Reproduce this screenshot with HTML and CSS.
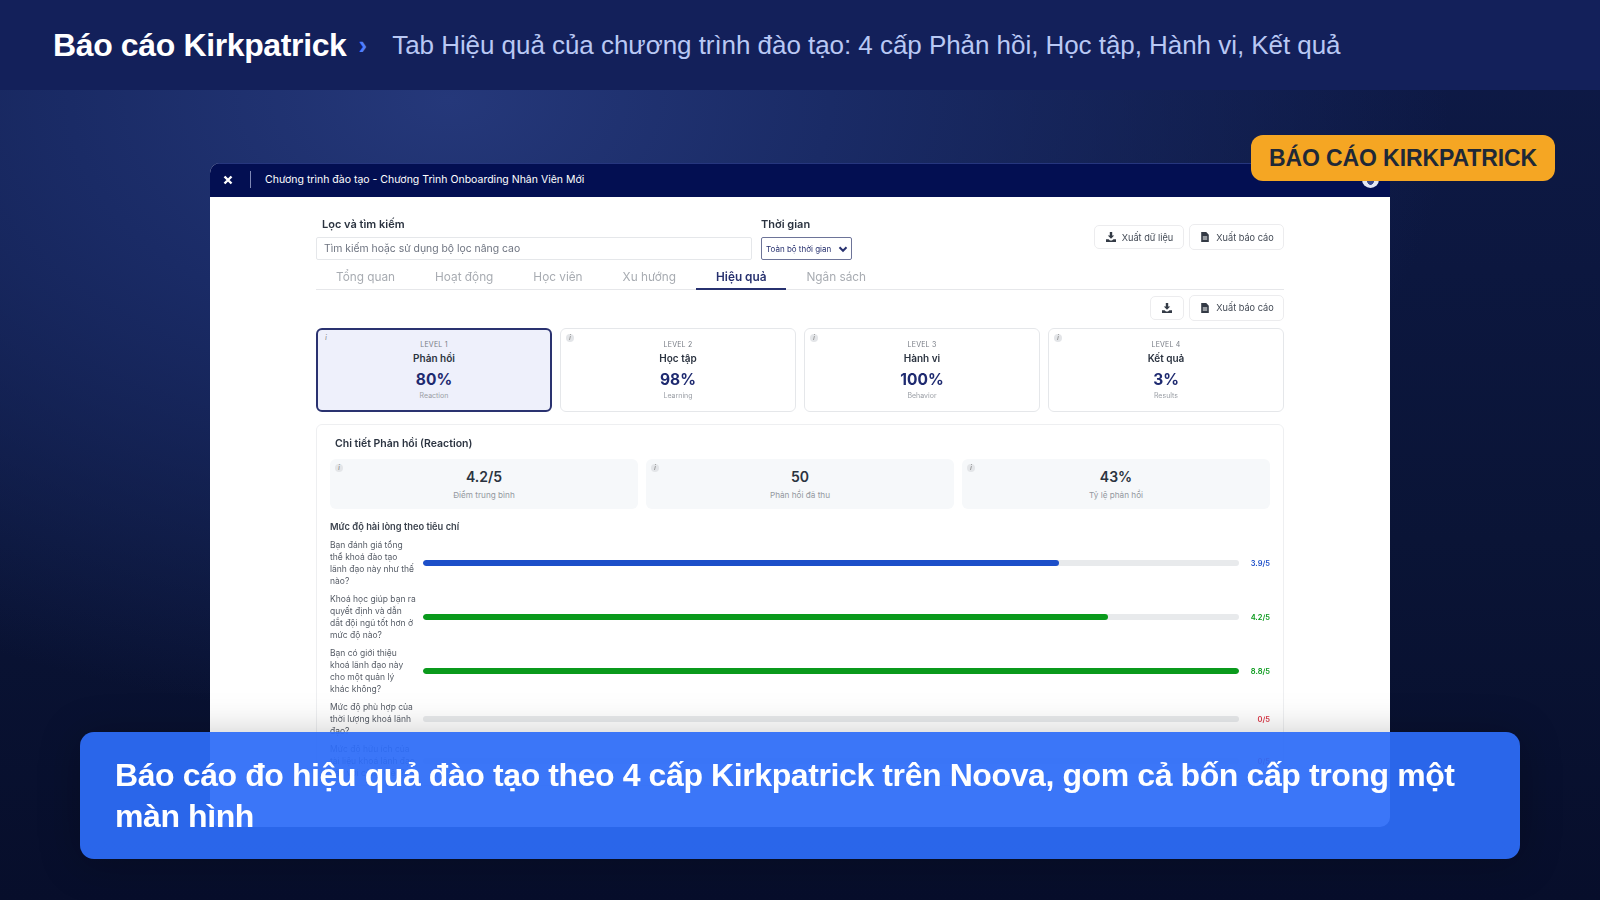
FILE: index.html
```html
<!DOCTYPE html>
<html lang="vi">
<head>
  <meta charset="UTF-8">
  <meta name="viewport" content="width=device-width, initial-scale=1.0">
  <title>Báo cáo Kirkpatrick</title>
  <link rel="stylesheet" href="styles.css">
</head>
<body>
  <header class="top-bar">
    <span class="top-title">Báo cáo Kirkpatrick</span>
    <span class="top-arrow">›</span>
    <span class="top-sub">Tab Hiệu quả của chương trình đào tạo: 4 cấp Phản hồi, Học tập, Hành vi, Kết quả</span>
  </header>

  <main class="stage">
    <section class="window">
      <div class="window-bar">
        <svg class="close-icon" viewBox="0 0 10 10"><path d="M1.5 1.5l7 7M8.5 1.5l-7 7"/></svg>
        <span class="bar-divider"></span>
        <span class="bar-title">Chương trình đào tạo - Chương Trình Onboarding Nhân Viên Mới</span>
        <span class="bar-avatar"></span>
      </div>

      <div class="content">
        <div class="filters">
          <div class="filter-search">
            <label class="filter-label">Lọc và tìm kiếm</label>
            <div class="search-box">Tìm kiếm hoặc sử dụng bộ lọc nâng cao</div>
          </div>
          <div class="filter-time">
            <label class="filter-label">Thời gian</label>
            <div class="select-box">Toàn bộ thời gian
              <svg class="chevron" viewBox="0 0 10 10"><path d="M1.5 3.2L5 6.8l3.5-3.6"/></svg>
            </div>
          </div>
          <div class="filter-actions">
            <button class="btn btn-small">
              <svg class="btn-icon" viewBox="0 0 12 12"><path d="M4.8 1h2.4v3.6h2L6 7.8 2.8 4.6h2zM1 8.2h2.6L5 9.6h2l1.4-1.4H11V11H1z"/></svg>
              Xuất dữ liệu
            </button>
            <button class="btn">
              <svg class="btn-icon" viewBox="0 0 12 12"><path d="M2.2 1h5l2.6 2.7V11H2.2zM3.8 5.4v1h4.4v-1zM3.8 7.4v1h4.4v-1z" fill-rule="evenodd"/></svg>
              Xuất báo cáo
            </button>
          </div>
        </div>

        <nav class="tabs">
          <span class="tab">Tổng quan</span>
          <span class="tab">Hoạt động</span>
          <span class="tab">Học viên</span>
          <span class="tab">Xu hướng</span>
          <span class="tab tab-active">Hiệu quả</span>
          <span class="tab">Ngân sách</span>
        </nav>

        <div class="tab-actions">
          <button class="btn btn-square">
            <svg class="btn-icon" viewBox="0 0 12 12"><path d="M4.8 1h2.4v3.6h2L6 7.8 2.8 4.6h2zM1 8.2h2.6L5 9.6h2l1.4-1.4H11V11H1z"/></svg>
          </button>
          <button class="btn">
            <svg class="btn-icon" viewBox="0 0 12 12"><path d="M2.2 1h5l2.6 2.7V11H2.2zM3.8 5.4v1h4.4v-1zM3.8 7.4v1h4.4v-1z" fill-rule="evenodd"/></svg>
            Xuất báo cáo
          </button>
        </div>

        <div class="levels">
          <div class="level level-active">
            <i class="info">i</i>
            <div class="level-tag">LEVEL 1</div>
            <div class="level-name">Phản hồi</div>
            <div class="level-pct">80%</div>
            <div class="level-en">Reaction</div>
          </div>
          <div class="level">
            <i class="info">i</i>
            <div class="level-tag">LEVEL 2</div>
            <div class="level-name">Học tập</div>
            <div class="level-pct">98%</div>
            <div class="level-en">Learning</div>
          </div>
          <div class="level">
            <i class="info">i</i>
            <div class="level-tag">LEVEL 3</div>
            <div class="level-name">Hành vi</div>
            <div class="level-pct">100%</div>
            <div class="level-en">Behavior</div>
          </div>
          <div class="level">
            <i class="info">i</i>
            <div class="level-tag">LEVEL 4</div>
            <div class="level-name">Kết quả</div>
            <div class="level-pct">3%</div>
            <div class="level-en">Results</div>
          </div>
        </div>

        <div class="detail">
          <h3 class="detail-title">Chi tiết Phản hồi (Reaction)</h3>
          <div class="stats">
            <div class="stat"><i class="info">i</i><div class="stat-value">4.2/5</div><div class="stat-label">Điểm trung bình</div></div>
            <div class="stat"><i class="info">i</i><div class="stat-value">50</div><div class="stat-label">Phản hồi đã thu</div></div>
            <div class="stat"><i class="info">i</i><div class="stat-value">43%</div><div class="stat-label">Tỷ lệ phản hồi</div></div>
          </div>

          <h4 class="rows-title">Mức độ hài lòng theo tiêu chí</h4>
          <div class="row">
            <div class="row-label">Bạn đánh giá tổng thể khoá đào tạo lãnh đạo này như thế nào?</div>
            <div class="track"><div class="fill fill-blue" style="width: 78%"></div></div>
            <div class="row-value val-blue">3.9/5</div>
          </div>
          <div class="row">
            <div class="row-label">Khoá học giúp bạn ra quyết định và dẫn dắt đội ngũ tốt hơn ở mức độ nào?</div>
            <div class="track"><div class="fill fill-green" style="width: 84%"></div></div>
            <div class="row-value val-green">4.2/5</div>
          </div>
          <div class="row">
            <div class="row-label">Bạn có giới thiệu khoá lãnh đạo này cho một quản lý khác không?</div>
            <div class="track"><div class="fill fill-green" style="width: 100%"></div></div>
            <div class="row-value val-green">8.8/5</div>
          </div>
          <div class="row">
            <div class="row-label">Mức độ phù hợp của thời lượng khoá lãnh đạo?</div>
            <div class="track"><div class="fill" style="width: 0%"></div></div>
            <div class="row-value val-red">0/5</div>
          </div>
          <div class="row">
            <div class="row-label">Mức độ hữu ích của tài liệu khoá lãnh đạo này với công việc?</div>
            <div class="track"><div class="fill" style="width: 0%"></div></div>
            <div class="row-value val-red">0/5</div>
          </div>
        </div>
      </div>
    </section>
  </main>

  <div class="badge">BÁO CÁO KIRKPATRICK</div>
  <div class="caption">Báo cáo đo hiệu quả đào tạo theo 4 cấp Kirkpatrick trên Noova, gom cả bốn cấp trong một màn hình</div>
</body>
</html>
```

FILE: styles.css
```css
* {
  box-sizing: border-box;
}
body {
  margin: 0;
  width: 1600px;
  height: 900px;
  overflow: hidden;
  position: relative;
  font-family: "Liberation Sans", Arial, sans-serif;
  background:
    radial-gradient(ellipse 1000px 620px at 450px 100px, #25387a 0%, #1a2b66 38%, rgba(15, 27, 70, 0) 100%),
    linear-gradient(180deg, #0e1a48 0%, #0a1436 60%, #070e2b 100%);
}
.top-bar {
  height: 90px;
  background: #13205a;
  display: flex;
  align-items: center;
  padding-left: 53px;
}
.top-title {
  font-size: 32px;
  font-weight: bold;
  letter-spacing: -0.37px;
  color: #fff;
}
.top-arrow {
  color: #4f7dff;
  font-size: 26px;
  font-weight: bold;
  margin: 0 25px 0 12px;
}
.top-sub {
  font-size: 26px;
  letter-spacing: -0.05px;
  color: #b9c8f4;
}
.stage {
  padding: 73px 0 0 210px;
}
.window {
  width: 1180px;
  height: 664px;
  border-radius: 10px;
  overflow: hidden;
  background: #fff;
  font-family: Inter, "Noto Sans", sans-serif;
  color: #2b3340;
}
.window-bar {
  height: 34px;
  background: #030f52;
  border-top: 1px solid #26367e;
  padding: 0 0 2px 13px;
  display: flex;
  align-items: center;
  color: #fff;
  font-size: 10.5px;
}
.close-icon {
  width: 10px;
  height: 10px;
  fill: none;
  stroke: #fff;
  stroke-width: 2.4;
}
.bar-divider {
  width: 1px;
  height: 17px;
  background: #7f88b5;
  margin: 0 14px 0 17px;
}
.bar-avatar {
  width: 17px;
  height: 17px;
  border-radius: 50%;
  background: radial-gradient(circle at 50% 62%, #3a4a8a 0 3px, #e3e6f3 3.5px);
  margin-left: auto;
  margin-right: 11px;
}
.content {
  padding: 20px 106px 0;
  filter: blur(0.35px);
}
.filters {
  display: flex;
  align-items: flex-start;
}
.filter-search {
  width: 436px;
  margin-right: 9px;
}
.filter-label {
  display: block;
  height: 14px;
  line-height: 15px;
  margin-bottom: 6px;
  font-size: 11px;
  font-weight: 600;
  padding-left: 6px;
}
.filter-time .filter-label {
  padding-left: 0;
}
.search-box {
  height: 23px;
  line-height: 21px;
  border: 1px solid #e5e7ea;
  border-radius: 2px;
  padding-left: 7px;
  font-size: 10.4px;
  color: #6e7480;
}
.select-box {
  width: 91px;
  height: 23px;
  border: 1px solid #6d7498;
  border-radius: 2px;
  padding-left: 4px;
  font-size: 8px;
  color: #27316f;
  display: flex;
  align-items: center;
  justify-content: space-between;
}
.chevron {
  width: 10px;
  height: 10px;
  fill: none;
  stroke: #27316f;
  stroke-width: 2;
  margin-right: 3px;
}
.filter-actions {
  margin-left: auto;
  margin-top: 7px;
  display: flex;
  align-items: center;
  gap: 5px;
}
.btn {
  width: 95px;
  height: 26px;
  background: #fff;
  border: 1px solid #ececee;
  border-radius: 5px;
  display: flex;
  align-items: center;
  justify-content: center;
  gap: 5px;
  padding: 0;
  font-family: inherit;
  font-size: 9.2px;
  color: #444b56;
}
.btn-small {
  width: 90px;
  height: 24px;
}
.btn-square {
  width: 34px;
  height: 24px;
}
.btn-icon {
  width: 12px;
  height: 12px;
  fill: #333a45;
}
.tabs {
  display: flex;
  height: 30px;
  border-bottom: 1px solid #e6e7ea;
}
.tab {
  height: 30px;
  line-height: 34px;
  padding: 0 20px;
  font-size: 11.8px;
  color: #a8acb2;
}
.tab-active {
  color: #27316f;
  font-weight: 600;
  border-bottom: 2px solid #27316f;
}
.tab-actions {
  display: flex;
  justify-content: flex-end;
  align-items: center;
  gap: 5px;
  margin-top: 4px;
  height: 27px;
}
.levels {
  display: grid;
  grid-template-columns: repeat(4, 1fr);
  gap: 8px;
  margin-top: 7px;
}
.level {
  height: 84px;
  border: 1px solid #e5e7ea;
  border-radius: 6px;
  position: relative;
  text-align: center;
  padding-top: 10px;
}
.level-active {
  background: #eef0fb;
  border: 2px solid #2a3270;
  padding-top: 9px;
}
.info {
  position: absolute;
  top: 5px;
  left: 5px;
  width: 8px;
  height: 8px;
  border-radius: 50%;
  background: #e3e5e8;
  font-size: 6px;
  line-height: 8px;
  text-align: center;
  color: #666;
}
.level-active .info {
  background: transparent;
  top: 4px;
  left: 4px;
}
.level-tag {
  font-size: 7px;
  line-height: 11px;
  color: #777c85;
  letter-spacing: 0.2px;
}
.level-name {
  font-size: 10px;
  line-height: 15px;
  margin-top: 1px;
  font-weight: 600;
  color: #2b3340;
}
.level-pct {
  font-size: 15.5px;
  line-height: 22px;
  margin-top: 3px;
  font-weight: 700;
  color: #1e2a70;
}
.level-en {
  font-size: 7px;
  line-height: 11px;
  margin-top: -1px;
  color: #9a9ea5;
}
.detail {
  margin-top: 12px;
  border: 1px solid #eeeff1;
  border-radius: 6px;
  padding: 11px 13px 0;
}
.detail-title {
  margin: 0 0 7px 5px;
  font-size: 10.5px;
  line-height: 16px;
  font-weight: 600;
  color: #2b3340;
}
.stats {
  display: grid;
  grid-template-columns: repeat(3, 1fr);
  gap: 8px;
}
.stat {
  height: 50px;
  background: #f6f8fa;
  border-radius: 6px;
  position: relative;
  text-align: center;
  padding-top: 9px;
}
.stat-value {
  font-size: 14px;
  line-height: 18px;
  font-weight: 600;
  color: #2b3340;
}
.stat-label {
  font-size: 8.2px;
  line-height: 11px;
  margin-top: 4px;
  color: #94989f;
}
.rows-title {
  margin: 10px 0 4px;
  font-size: 9.3px;
  line-height: 16px;
  font-weight: 600;
  color: #3c434e;
}
.row {
  display: flex;
  align-items: center;
  margin-bottom: 6px;
}
.row-label {
  width: 86px;
  margin-right: 7px;
  font-size: 8.5px;
  line-height: 12px;
  color: #565c66;
}
.track {
  flex: 1;
  height: 6px;
  border-radius: 3px;
  background: #e8eaec;
  overflow: hidden;
}
.fill {
  height: 100%;
  border-radius: 3px;
}
.fill-blue {
  background: #1d4fc9;
}
.fill-green {
  background: #0a9a1c;
}
.row-value {
  width: 31px;
  text-align: right;
  font-size: 7.5px;
  font-weight: 600;
}
.val-blue {
  color: #1d4fc9;
}
.val-green {
  color: #0a9a1c;
}
.val-red {
  color: #dc3545;
}
.badge {
  position: absolute;
  left: 1251px;
  top: 135px;
  width: 304px;
  height: 46px;
  line-height: 46px;
  text-align: center;
  background: #f5a623;
  border-radius: 12px;
  font-size: 23px;
  letter-spacing: -0.1px;
  font-weight: bold;
  color: #1f2937;
}
.caption {
  position: absolute;
  left: 80px;
  top: 732px;
  width: 1440px;
  height: 127px;
  padding: 23px 35px;
  background: rgba(45, 108, 247, 0.935);
  border-radius: 14px;
  box-shadow: 0 4px 40px rgba(0, 0, 0, 0.25);
  font-size: 32px;
  letter-spacing: -0.4px;
  line-height: 41px;
  font-weight: bold;
  color: #fff;
}
```
